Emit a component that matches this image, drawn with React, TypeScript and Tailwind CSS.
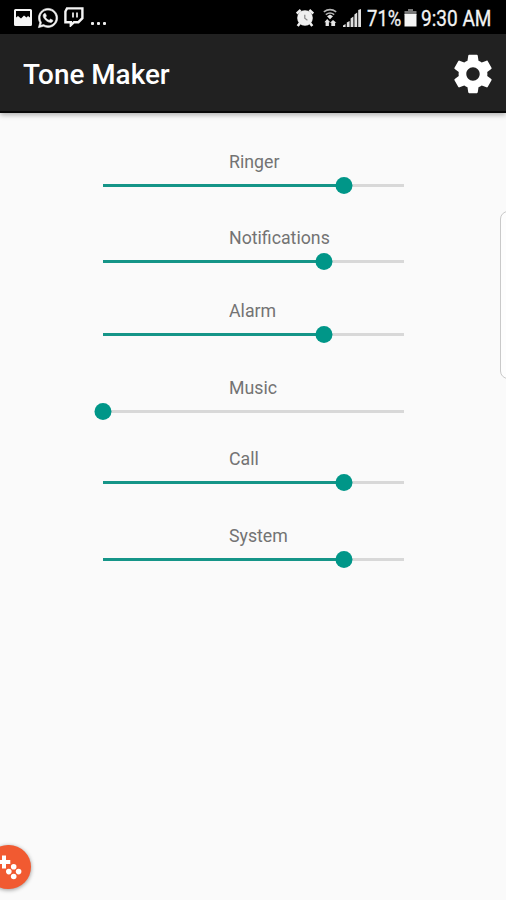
import React from 'react';
import { FaWhatsapp } from 'react-icons/fa';

type Volume = { label: string; value: number; gap: string };

const volumes: Volume[] = [
  { label: 'Ringer', value: 80, gap: '' },
  { label: 'Notifications', value: 73.3, gap: 'mt-7' },
  { label: 'Alarm', value: 73.3, gap: 'mt-[25px]' },
  { label: 'Music', value: 0, gap: 'mt-[29px]' },
  { label: 'Call', value: 80, gap: 'mt-[23px]' },
  { label: 'System', value: 80, gap: 'mt-[29px]' },
];

function StatusBar() {
  return (
    <div className="flex h-[34px] items-center bg-black pl-[14px] text-[22px] leading-6 text-[#f2f2f2]">
      <svg className="mt-[2px] h-[18px] w-[18px]" viewBox="0 0 18 18">
        <path fill="#f5f5f5" fillRule="evenodd" d="M1.5 0h15A1.5 1.5 0 0 1 18 1.5v14a1.5 1.5 0 0 1-1.5 1.5h-15A1.5 1.5 0 0 1 0 15.5v-14A1.5 1.5 0 0 1 1.5 0ZM2 2v6.5l2-1.5 3 2.5 3-3 2.5 2L14 7l2 1.5V2Z" />
      </svg>
      <FaWhatsapp className="mt-[2px] ml-[5px] h-[22px] w-[22px] stroke-[#f5f5f5] stroke-[14px] text-[#f5f5f5]" />
      <svg className="ml-[5px] h-5 w-5" viewBox="0 0 20 20">
        <path fill="none" stroke="#f5f5f5" strokeWidth="2.4" d="M3 1.4h15.4v9.8l-4 4H10l-3.2 3v-3H1.4V4.5Z" />
        <path stroke="#f5f5f5" strokeWidth="1.7" d="M9 5.5v5M13 5.5v5" />
      </svg>
      <div className="mt-[13px] ml-[7px] flex gap-[3px]">
        <i className="h-[3px] w-[3px] rounded-[1px] bg-[#eeeeee]" />
        <i className="h-[3px] w-[3px] rounded-[1px] bg-[#eeeeee]" />
        <i className="h-[3px] w-[3px] rounded-[1px] bg-[#eeeeee]" />
      </div>
      <svg className="mt-px ml-[190px] h-[18px] w-[18px]" viewBox="0 0 18 18">
        <circle cx="9" cy="9" r="7.8" fill="#f0f0f0" />
        <path stroke="#f0f0f0" strokeWidth="2.6" d="m.7 4.6 4-3.6M17.3 4.6l-4-3.6M4 14l-2.3 3M14 14l2.3 3" />
        <path fill="none" stroke="#888" strokeWidth="1.2" d="M8.8 5.8v3.5l2.6 1.9" />
      </svg>
      <svg className="ml-[8px] h-[19px] w-4" viewBox="0 0 16 19">
        <path fill="none" stroke="#b5b5b5" strokeWidth="1.6" d="M1.8 3.8Q8-.6 14.2 3.8M3.8 6.6Q8 3.4 12.2 6.6" />
        <path fill="#e5e5e5" d="m5 8.3 3-1.8 3 1.8-3 3ZM5.2 11l3 3.2H6.9V18H3.6v-3.8H2.4ZM11 18H9.3v-3.2H8L11 12l3.4 2.8h-1.3V18Z" />
      </svg>
      <svg className="mt-[2px] ml-[5px] h-[18px] w-[18px]" viewBox="0 0 18 18">
        <path fill="#e0e0e0" d="M0 16.5 2.6 15v3H0ZM3.8 13.5l2.8-1.5v6H3.8ZM7.6 9.5l2.8-2V18H7.6ZM11.4 5.5l2.8-2V18h-2.8ZM15.2 1 18 0v18h-2.8Z" />
      </svg>
      <div className="mt-[3px] ml-[6px] w-[35px]">
        <span className="inline-block origin-left scale-x-[0.84] [-webkit-text-stroke:0.3px]">71%</span>
      </div>
      <svg className="mt-px ml-[2px] h-[18px] w-[13px]" viewBox="0 0 13 18">
        <path fill="#777" d="M4 0h5v2h3.5v4H.5V2H4Z" />
        <path fill="#f5f5f5" d="M.5 5h12v12.5H.5Z" />
      </svg>
      <div className="mt-[3px] ml-[4px] w-[70px] whitespace-nowrap">
        <span className="inline-block origin-left scale-x-[0.865] [-webkit-text-stroke:0.3px]">9:30 AM</span>
      </div>
    </div>
  );
}

function Header() {
  return (
    <header className="flex h-[79px] items-center justify-between border-b-2 border-[#080808] bg-[#212121] pr-[10px] pl-[23px] shadow-[0_2px_5px_rgba(0,0,0,0.3)]">
      <h1 className="pt-[4px] text-[28px] leading-8 font-medium text-white">
        <span className="inline-block origin-left scale-x-[0.995]">Tone Maker</span>
      </h1>
      <svg className="mt-[2px] h-[46px] w-[46px]" viewBox="0 0 24 24" fill="white">
        <path d="M19.43 12.98c.04-.32.07-.64.07-.98s-.03-.66-.07-.98l2.11-1.65c.19-.15.24-.42.12-.64l-2-3.46c-.12-.22-.39-.3-.61-.22l-2.49 1c-.52-.4-1.08-.73-1.69-.98l-.38-2.65C14.46 2.18 14.25 2 14 2h-4c-.25 0-.46.18-.49.42l-.38 2.65c-.61.25-1.17.59-1.69.98l-2.49-1c-.23-.09-.49 0-.61.22l-2 3.46c-.13.22-.07.49.12.64l2.11 1.65c-.04.32-.07.65-.07.98s.03.66.07.98l-2.11 1.65c-.19.15-.24.42-.12.64l2 3.46c.12.22.39.3.61.22l2.49-1c.52.4 1.08.73 1.69.98l.38 2.65c.03.24.24.42.49.42h4c.25 0 .46-.18.49-.42l.38-2.65c.61-.25 1.17-.59 1.69-.98l2.49 1c.23.09.49 0 .61-.22l2-3.46c.12-.22.07-.49-.12-.64l-2.11-1.65zM12 15.5c-1.93 0-3.5-1.57-3.5-3.5s1.57-3.5 3.5-3.5 3.5 1.57 3.5 3.5-1.57 3.5-3.5 3.5z" />
      </svg>
    </header>
  );
}

function VolumeSlider({ label, value, gap }: Volume) {
  return (
    <div className={`flex w-[301px] flex-col ${gap}`}>
      <div className="h-6 pt-px pl-[126px] text-[18px] leading-6 text-[#737373]">
        <span className="inline-block origin-left scale-x-[0.985]">{label}</span>
      </div>
      <div className="relative flex h-6 items-center">
        <div className="h-[3px] w-full bg-[#d8d8d8]">
          <div className="h-full bg-[#159588]" style={{ width: `${value}%` }} />
        </div>
        <div
          className="absolute h-[17px] w-[17px] -translate-x-1/2 rounded-full bg-[#009688]"
          style={{ left: `${value}%` }}
        />
      </div>
    </div>
  );
}

export default function App() {
  return (
    <div className="relative h-[900px] w-[506px] overflow-hidden bg-[#fafafa] font-['Roboto',sans-serif]">
      <StatusBar />
      <Header />
      <main className="flex flex-col pt-[36px] pl-[103px]">
        {volumes.map((v) => (
          <VolumeSlider key={v.label} {...v} />
        ))}
      </main>
      <div className="absolute top-[211px] -right-[10px] h-[168px] w-4 rounded-[8px] border border-[#c9c9c9] bg-[#fdfdfd]" />
      <div className="absolute top-[845px] -left-[14px] h-11 w-[45px] rounded-full bg-[#f15a31] shadow-[0_1px_4px_rgba(0,0,0,0.4)]">
        <svg className="h-full w-full" viewBox="0 0 45 44" fill="white">
          <path d="M16 10.5h4v4.4h4.3v4H20v4.5h-4v-4.5h-4.3v-4H16Z" />
          <circle cx="27.7" cy="21.7" r="2.8" />
          <circle cx="22.8" cy="26.6" r="2.8" />
          <circle cx="32.6" cy="26.6" r="2.8" />
          <circle cx="27.7" cy="31.5" r="2.8" />
        </svg>
      </div>
    </div>
  );
}
